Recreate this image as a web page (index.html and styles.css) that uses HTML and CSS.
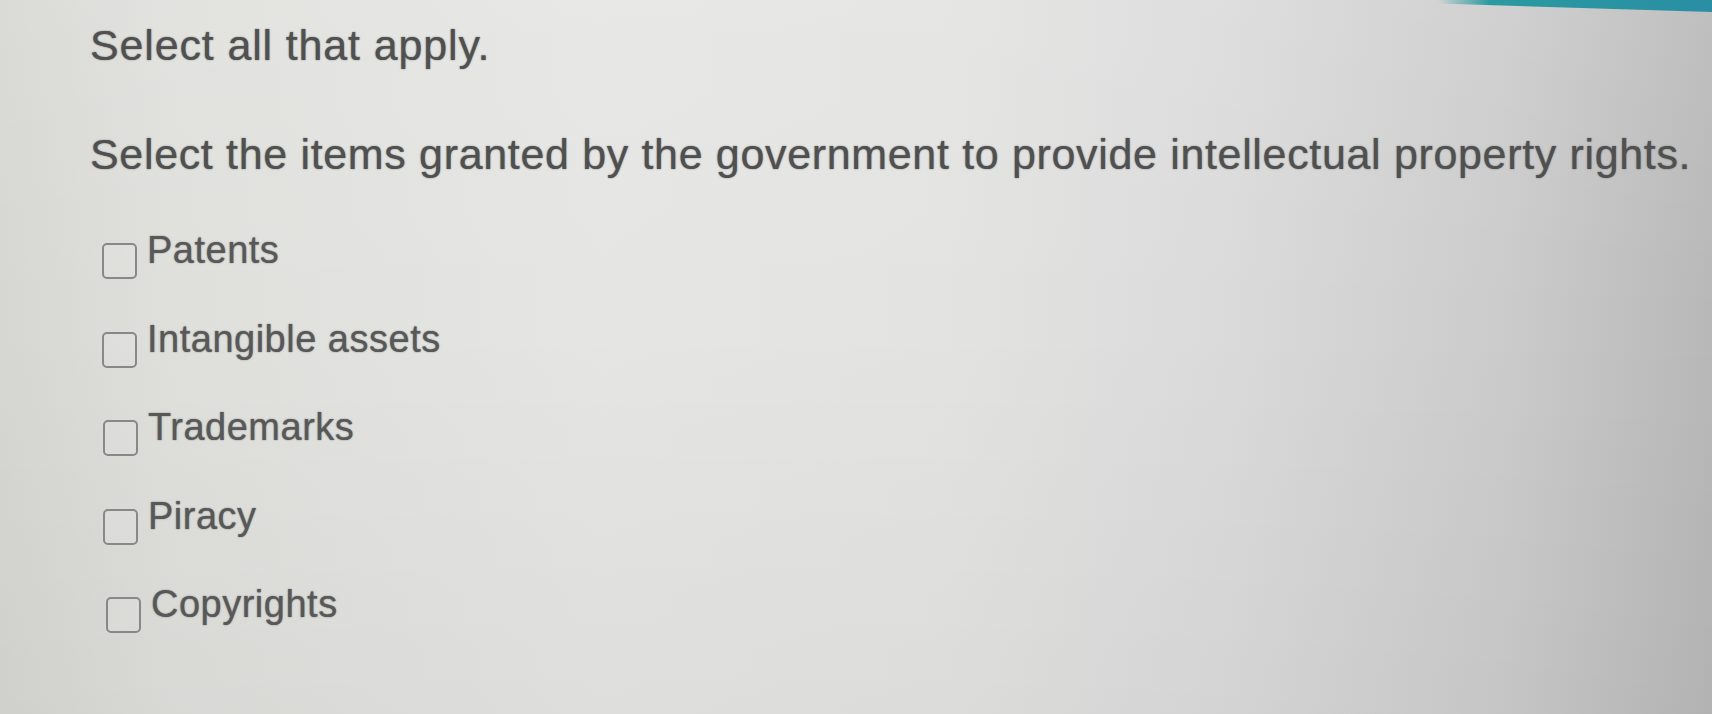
FILE: index.html
```html
<!DOCTYPE html>
<html lang="en">
<head>
<meta charset="utf-8">
<title>Select all that apply</title>
<link rel="stylesheet" href="styles.css">
</head>
<body>
<main class="quiz">
  <div class="topbar"></div>
  <p class="instr">Select all that apply.</p>
  <p class="question">Select the items granted by the government to provide intellectual property rights.</p>
  <ul class="options">
    <li class="option"><span class="box"></span><span class="label">Patents</span></li>
    <li class="option"><span class="box"></span><span class="label">Intangible assets</span></li>
    <li class="option"><span class="box"></span><span class="label">Trademarks</span></li>
    <li class="option"><span class="box"></span><span class="label">Piracy</span></li>
    <li class="option"><span class="box"></span><span class="label">Copyrights</span></li>
  </ul>
</main>
</body>
</html>
```

FILE: styles.css
```css
html, body {
  margin: 0;
  padding: 0;
  height: 100%;
}

body {
  font-family: "Liberation Sans", Arial, sans-serif;
  color: #505050;
  background:
    linear-gradient(180deg, rgba(255,255,255,0.10) 0%, rgba(255,255,255,0) 45%, rgba(0,0,0,0.03) 100%),
    linear-gradient(90deg, #d6d6d2 0%, #dfdfdc 10%, #e5e5e3 35%, #e3e3e2 55%, #dadada 72%, #cbcbcb 88%, #b8b8b8 100%);
  overflow: hidden;
}

.quiz {
  display: flex;
  flex-direction: column;
  padding: 0 0 0 90px;
}

.topbar {
  height: 12px;
  margin-left: -90px;
  background: linear-gradient(90deg, rgba(40,150,160,0) 0%, rgba(40,150,160,0) 84%, #2a9aa0 87%, #2a8ea4 100%);
  clip-path: polygon(84% 0, 100% 0, 100% 100%, 84% 30%);
}

.instr {
  margin: 12px 0 0;
  font-size: 43px;
  line-height: 43px;
  letter-spacing: 0.85px;
  text-shadow: 0 0 1.5px rgba(60,60,60,0.75);
}

.question {
  margin: 66px 0 0;
  font-size: 43px;
  line-height: 43px;
  letter-spacing: 0.66px;
  white-space: nowrap;
  text-shadow: 0 0 1.5px rgba(60,60,60,0.75);
}

.options {
  list-style: none;
  margin: 55px 0 0;
  padding: 0;
  display: flex;
  flex-direction: column;
  gap: 40.5px;
}

.option {
  display: flex;
  align-items: flex-start;
  gap: 10px;
  padding-left: 12px;
}

.option:nth-child(3), .option:nth-child(4) { padding-left: 13px; }
.option:nth-child(5) { padding-left: 16px; }

.box {
  flex: none;
  width: 31px;
  height: 32px;
  margin-top: 12px;
  border: 2.5px solid #888888;
  border-radius: 5px;
  background: rgba(255,255,255,0.08);
  filter: blur(0.5px);
}

.label {
  font-size: 38px;
  line-height: 38px;
  letter-spacing: 0.5px;
  color: #585858;
  text-shadow: 0 0 1.5px rgba(70,70,70,0.75);
}
```
